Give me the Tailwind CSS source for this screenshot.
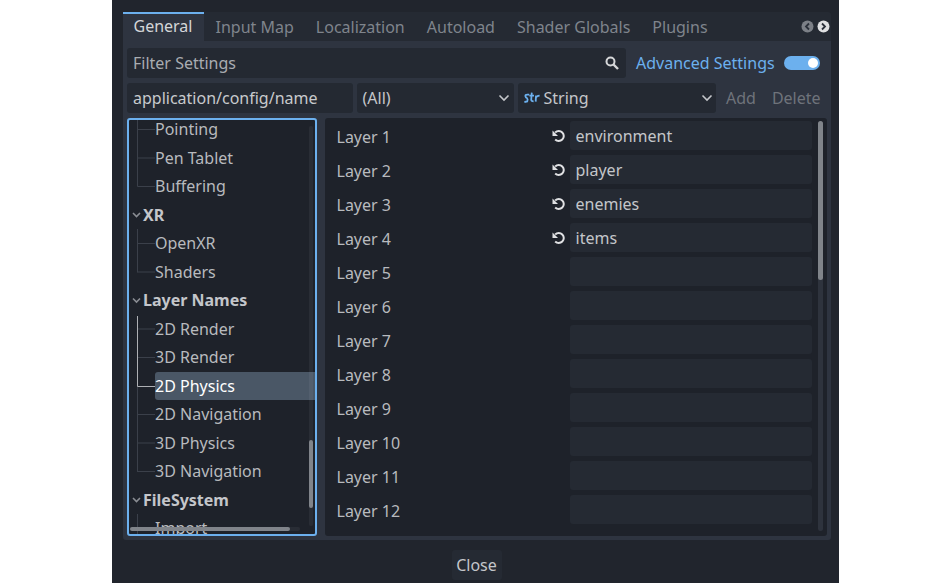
<!DOCTYPE html>
<html lang="en">
<head>
    <meta charset="UTF-8">
    <title>Project Settings</title>
    <script src="https://cdn.jsdelivr.net/npm/@tailwindcss/browser@4"></script>
</head>
<body class="bg-white font-['Noto_Sans',sans-serif] text-[16px] leading-[22px] text-[#c4c6ca] overflow-hidden">
    <div class="w-[950px] h-[583px] flex justify-center">
        <!-- dialog window -->
        <div class="w-[727px] h-[583px] bg-[#21252d] pl-[11px] pr-[8px] pt-[12px] flex flex-col">
            <!-- tab bar -->
            <div class="h-[29px] flex items-center bg-[#252a33] rounded-t-[3px]">
                <div class="h-[29px] w-[81px] bg-[#2e3440] border-t-2 border-[#6cb0ee] text-center pt-[1px] text-[#d4d6d9]">General</div>
                <div class="flex gap-[22px] pl-[12px] text-[#7f848c] flex-1">
                    <span>Input Map</span><span>Localization</span><span>Autoload</span><span>Shader Globals</span><span>Plugins</span>
                </div>
                <div class="flex gap-[3px] mr-[1px]">
                    <svg width="13" height="13" viewBox="0 0 13 13"><circle cx="6.5" cy="6.5" r="6" fill="#7c8087"/><path d="M8 3.5 5 6.5 8 9.5" fill="none" stroke="#2b303a" stroke-width="1.8"/></svg>
                    <svg width="13" height="13" viewBox="0 0 13 13"><circle cx="6.5" cy="6.5" r="6" fill="#e0e1e3"/><path d="M5 3.5 8 6.5 5 9.5" fill="none" stroke="#2b303a" stroke-width="1.8"/></svg>
                </div>
            </div>
            <!-- tab panel -->
            <div class="w-[708px] h-[499px] bg-[#2e3440] rounded-b-[3px] pl-[4px] pr-[4px] pt-[7px]">
                <div class="flex items-center h-[30px]">
                    <div class="w-[499px] h-[30px] bg-[#242932] rounded-[3px] flex items-center justify-between pl-[6.5px] pr-[6px] text-[#a9acb1]">
                        <span>Filter Settings</span>
                        <svg width="16" height="16" viewBox="0 0 16 16"><circle cx="6.5" cy="6.5" r="4" fill="none" stroke="#d6d7d9" stroke-width="2"/><path d="M9.5 9.5 14 14" stroke="#d6d7d9" stroke-width="2.4"/></svg>
                    </div>
                    <span class="ml-[10.5px] text-[#6cb0ee]">Advanced Settings</span>
                    <div class="ml-[9px] w-[36px] h-[14px] rounded-full bg-[#6cb0ee] flex items-center justify-end pr-[2px]">
                        <div class="w-[10px] h-[10px] rounded-full bg-white"></div>
                    </div>
                </div>
                <div class="flex items-center h-[30px] mt-[5px]">
                    <div class="w-[226px] h-[30px] bg-[#242932] rounded-[3px] flex items-center pl-[6.5px] text-[#c8cacd]">application/config/name</div>
                    <div class="ml-[4px] w-[157px] h-[30px] bg-[#242932] rounded-[3px] flex items-center justify-between pl-[6px] pr-[4px]">
                        <span>(All)</span>
                        <svg width="12" height="8" viewBox="0 0 12 8"><path d="M1.5 1.5 6 6 10.5 1.5" fill="none" stroke="#c4c6ca" stroke-width="1.6"/></svg>
                    </div>
                    <div class="ml-[4px] w-[198px] h-[30px] bg-[#242932] rounded-[3px] flex items-center pl-[6px] pr-[3px]">
                        <svg width="16" height="12" viewBox="0 0 16 12" class="shrink-0"><path d="M5.2 2.6H3.2Q1.2 2.6 1.4 4.2T3 6.2Q4.2 7.4 3.2 9.5L.4 10M7.8 .6 7.2 7.6Q7.2 9.4 9.6 9.4M5.4 3.6H10M11.7 9.6 12 3.6M11.9 5.8Q12.6 3.6 15.6 3.6" fill="none" stroke="#6cb0ee" stroke-width="1.8"/></svg>
                        <span class="ml-[4px] flex-1">String</span>
                        <svg width="12" height="8" viewBox="0 0 12 8"><path d="M1.5 1.5 6 6 10.5 1.5" fill="none" stroke="#c4c6ca" stroke-width="1.6"/></svg>
                    </div>
                    <span class="ml-[10.5px] text-[#6e737b]">Add</span>
                    <span class="ml-[16px] text-[#6e737b]">Delete</span>
                </div>
                <div class="flex mt-[5px] h-[418px]">
                    <!-- section tree -->
                    <div class="relative w-[190px] h-[418px] bg-[#1e222a] border-2 border-[#6cb0ee] rounded-[3px] overflow-hidden">
                        <div class="-mt-[5px] text-[#b8babe]">
                            <div class="h-[28.5px] pl-[26.5px] flex items-center">Pointing</div>
                            <div class="h-[28.5px] pl-[26.5px] flex items-center">Pen Tablet</div>
                            <div class="h-[28.5px] pl-[26.5px] flex items-center">Buffering</div>
                            <div class="h-[28.5px] pl-[14.5px] flex items-center font-bold text-[#c4c6ca]">XR</div>
                            <div class="h-[28.5px] pl-[26.5px] flex items-center">OpenXR</div>
                            <div class="h-[28.5px] pl-[26.5px] flex items-center">Shaders</div>
                            <div class="h-[28.5px] pl-[14.5px] flex items-center font-bold text-[#c4c6ca]">Layer Names</div>
                            <div class="h-[28.5px] pl-[26.5px] flex items-center">2D Render</div>
                            <div class="h-[28.5px] pl-[26.5px] flex items-center">3D Render</div>
                            <div class="h-[28.5px] ml-[26px] pl-[0.5px] flex items-center bg-[#4a5766] rounded-l-[3px] text-white">2D Physics</div>
                            <div class="h-[28.5px] pl-[26.5px] flex items-center">2D Navigation</div>
                            <div class="h-[28.5px] pl-[26.5px] flex items-center">3D Physics</div>
                            <div class="h-[28.5px] pl-[26.5px] flex items-center">3D Navigation</div>
                            <div class="h-[28.5px] pl-[14.5px] flex items-center font-bold text-[#c4c6ca]">FileSystem</div>
                            <div class="h-[28.5px] pl-[26.5px] flex items-center">Import</div>
                        </div>
                        <!-- guide lines and fold arrows, coordinates relative to the tree -->
                        <svg class="absolute left-0 top-0" width="30" height="414" viewBox="0 0 30 414" fill="none">
                            <path d="M8.5 0V66.5M8.5 9.5H26M8.5 38H26M8.5 66.5H26M8.5 109V152.5M8.5 123.5H26M8.5 152H26M8.5 209H26M8.5 237.5H26M8.5 266V352M8.5 294.5H26M8.5 323H26M8.5 351.5H26M8.5 394V414M8.5 408.5H26" stroke="#3b404a"/>
                            <path d="M8.5 196V266.5H26" stroke="#aeb0b4"/>
                            <path d="M4 93 7.5 96.5 11 93M4 178.5 7.5 182 11 178.5M4 378 7.5 381.5 11 378" stroke="#8a8d93" stroke-width="1.6"/>
                        </svg>
                        <!-- scrollbars -->
                        <div class="absolute left-[180px] top-[6px] w-[4px] h-[400px] bg-white/5 rounded-full">
                            <div class="mt-[314px] h-[68px] bg-[#80848a] rounded-full"></div>
                        </div>
                        <div class="absolute left-[1px] top-[407px] w-[170px] h-[4px] bg-white/5 rounded-full">
                            <div class="w-[160px] h-[4px] bg-[#80848a] rounded-full"></div>
                        </div>
                    </div>
                    <!-- layer rows -->
                    <div class="relative ml-[8px] w-[502px] h-[418px] bg-[#1e222a] rounded-[3px] overflow-hidden pl-[12px] pt-[3px] pr-[15px]">
                        <div class="flex flex-col gap-[5px] text-[#b8babe]">
                            <div class="flex h-[29px] items-center">
                                <span class="flex-1 pt-[2px]">Layer 1</span>
                                <svg width="16" height="16" viewBox="0 0 16 16" fill="none"><path d="M4.2 4.5A5 5 0 1 1 4.2 11.5" stroke="#e0e1e3" stroke-width="2"/><path d="M1.5 2.5V8H7Z" fill="#e0e1e3"/></svg>
                                <div class="ml-[3px] w-[242px] h-[29px] bg-[#252a33] rounded-[3px] flex items-center pl-[6px] text-[#c4c6ca]">environment</div>
                            </div>
                            <div class="flex h-[29px] items-center">
                                <span class="flex-1 pt-[2px]">Layer 2</span>
                                <svg width="16" height="16" viewBox="0 0 16 16" fill="none"><path d="M4.2 4.5A5 5 0 1 1 4.2 11.5" stroke="#e0e1e3" stroke-width="2"/><path d="M1.5 2.5V8H7Z" fill="#e0e1e3"/></svg>
                                <div class="ml-[3px] w-[242px] h-[29px] bg-[#252a33] rounded-[3px] flex items-center pl-[6px] text-[#c4c6ca]">player</div>
                            </div>
                            <div class="flex h-[29px] items-center">
                                <span class="flex-1 pt-[2px]">Layer 3</span>
                                <svg width="16" height="16" viewBox="0 0 16 16" fill="none"><path d="M4.2 4.5A5 5 0 1 1 4.2 11.5" stroke="#e0e1e3" stroke-width="2"/><path d="M1.5 2.5V8H7Z" fill="#e0e1e3"/></svg>
                                <div class="ml-[3px] w-[242px] h-[29px] bg-[#252a33] rounded-[3px] flex items-center pl-[6px] text-[#c4c6ca]">enemies</div>
                            </div>
                            <div class="flex h-[29px] items-center">
                                <span class="flex-1 pt-[2px]">Layer 4</span>
                                <svg width="16" height="16" viewBox="0 0 16 16" fill="none"><path d="M4.2 4.5A5 5 0 1 1 4.2 11.5" stroke="#e0e1e3" stroke-width="2"/><path d="M1.5 2.5V8H7Z" fill="#e0e1e3"/></svg>
                                <div class="ml-[3px] w-[242px] h-[29px] bg-[#252a33] rounded-[3px] flex items-center pl-[6px] text-[#c4c6ca]">items</div>
                            </div>
                            <div class="flex h-[29px] items-center justify-between"><span class="pt-[2px]">Layer 5</span><div class="w-[242px] h-[29px] bg-[#252a33] rounded-[3px]"></div></div>
                            <div class="flex h-[29px] items-center justify-between"><span class="pt-[2px]">Layer 6</span><div class="w-[242px] h-[29px] bg-[#252a33] rounded-[3px]"></div></div>
                            <div class="flex h-[29px] items-center justify-between"><span class="pt-[2px]">Layer 7</span><div class="w-[242px] h-[29px] bg-[#252a33] rounded-[3px]"></div></div>
                            <div class="flex h-[29px] items-center justify-between"><span class="pt-[2px]">Layer 8</span><div class="w-[242px] h-[29px] bg-[#252a33] rounded-[3px]"></div></div>
                            <div class="flex h-[29px] items-center justify-between"><span class="pt-[2px]">Layer 9</span><div class="w-[242px] h-[29px] bg-[#252a33] rounded-[3px]"></div></div>
                            <div class="flex h-[29px] items-center justify-between"><span class="pt-[2px]">Layer 10</span><div class="w-[242px] h-[29px] bg-[#252a33] rounded-[3px]"></div></div>
                            <div class="flex h-[29px] items-center justify-between"><span class="pt-[2px]">Layer 11</span><div class="w-[242px] h-[29px] bg-[#252a33] rounded-[3px]"></div></div>
                            <div class="flex h-[29px] items-center justify-between"><span class="pt-[2px]">Layer 12</span><div class="w-[242px] h-[29px] bg-[#252a33] rounded-[3px]"></div></div>
                        </div>
                        <div class="absolute left-[493px] top-[3px] w-[5px] h-[410px] bg-[#2e333d] rounded-full">
                            <div class="h-[159px] bg-[#80848a] rounded-full"></div>
                        </div>
                    </div>
                </div>
            </div>
            <!-- footer -->
            <div class="flex justify-center pt-[10px]">
                <div class="w-[50px] h-[30px] bg-[#252a33] rounded-[3px] flex items-center justify-center">Close</div>
            </div>
        </div>
    </div>
</body>
</html>
